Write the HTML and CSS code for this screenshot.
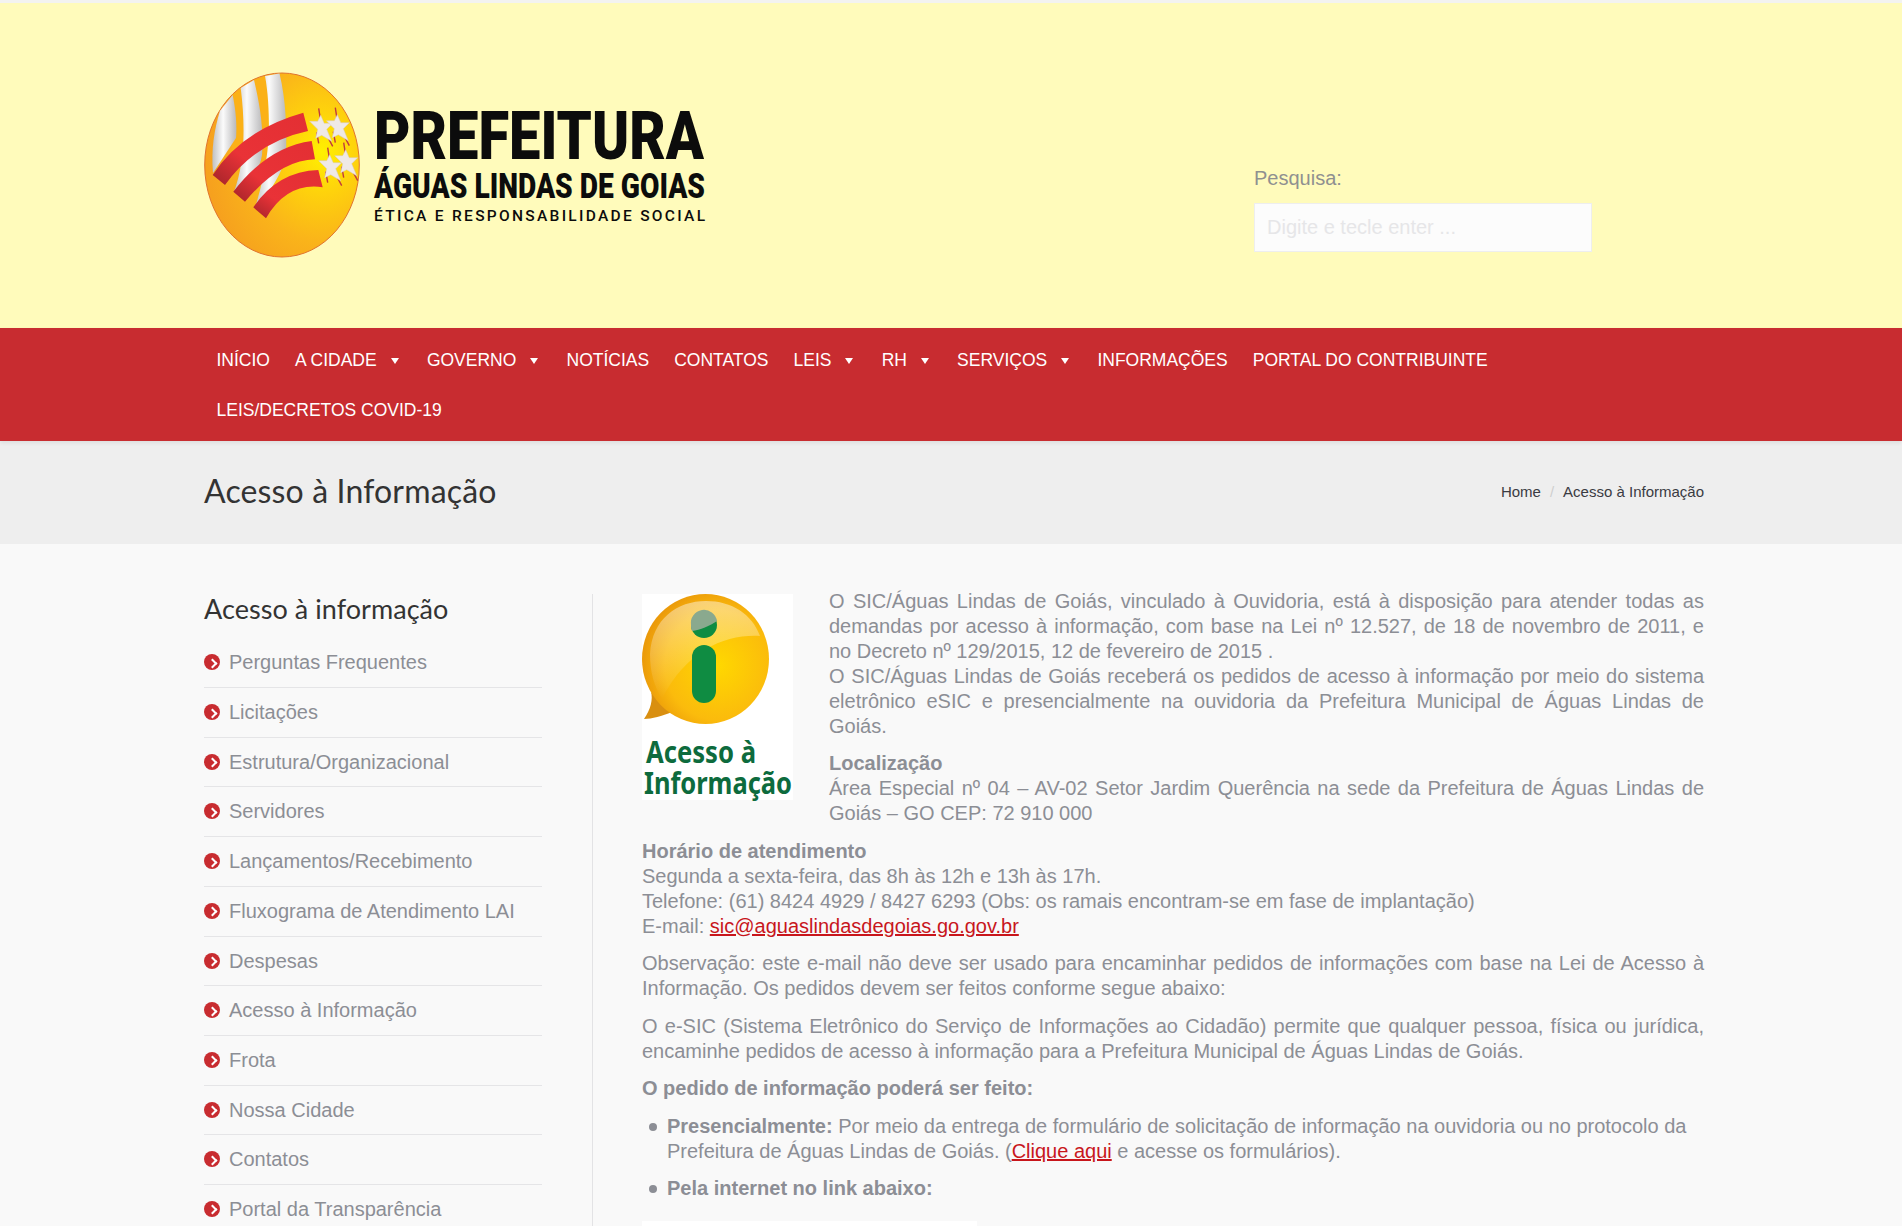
FILE: index.html
```html
<!DOCTYPE html>
<html lang="pt-BR">
<head>
<meta charset="utf-8">
<title>Acesso à Informação</title>
<link rel="stylesheet" href="styles.css">
</head>
<body>
<div class="page">
  <header class="top">
    <div class="wrap top-inner">
      <svg class="logo" viewBox="0 0 510 195" width="510" height="195" aria-label="Prefeitura Águas Lindas de Goias">
        <defs>
          <radialGradient id="sun" cx="0.76" cy="0.43" r="0.75">
            <stop offset="0" stop-color="#fff000"/>
            <stop offset="0.3" stop-color="#fed20c"/>
            <stop offset="0.65" stop-color="#fab41a"/>
            <stop offset="1" stop-color="#f6a11e"/>
          </radialGradient>
          <linearGradient id="silver" x1="0" x2="1" y1="0" y2="0">
            <stop offset="0" stop-color="#bfc0c2"/>
            <stop offset="0.45" stop-color="#fbfbfb"/>
            <stop offset="1" stop-color="#b9b9bb"/>
          </linearGradient>
          <linearGradient id="band" x1="0" x2="1" y1="1" y2="0">
            <stop offset="0" stop-color="#a3242a"/>
            <stop offset="0.35" stop-color="#e93237"/>
            <stop offset="1" stop-color="#e32f33"/>
          </linearGradient>
          <g id="st">
            <path class="sliver" d="M-3 -19 L-1 -6 M3 4 L11 19 M-5 5 L-3 16"/>
            <polygon class="star" points="-1,-12 2.500,-4 11,-4 5,2 10,14 0,8 -6,11 -4,2 -12,-6 -4,-6"/>
          </g>
        </defs>
        <ellipse cx="78" cy="95" rx="77.300" ry="92" fill="url(#sun)" stroke="#e0742e" stroke-width="1"/>
        <path class="orange" d="M28 25 L37 18 C 42 50 42 70 40 90 L 28 90Z"/>
        <path class="orange" d="M50 10 L61 6 C 66 40 66 80 58 115 L 48 100Z"/>
        <path class="stripe" d="M16 40.700 L28.700 25 C 32 42 33 55 32 68 L 9 103 C 7 80 10 60 16 40.700Z"/>
        <path class="stripe" d="M36.700 18 L50 10 C 56 35 60 60 58 85 C 56 100 45 112 34 122 L 30 122 C 40 95 42 60 36.700 18Z"/>
        <path class="stripe" d="M61 6 L75.500 3.500 C 82 30 83 60 82 85 C 80 100 65 125 51 138 C 58 115 64 90 65 60 C 65 40 64 22 61 6Z"/>
        <path class="bandred" d="M8.700 105 Q 38 60 99.300 42.700 L 104 61 Q 52 72 21 115Z"/>
        <path class="bandred" d="M29.300 121.700 Q 63.500 77 107.700 71 L 111 89.300 Q 76 90 41 131.700Z"/>
        <path class="bandred" d="M49.300 137.300 Q 73.600 101.400 114.300 100 L 118.700 117.300 Q 83 112 62 148.300Z"/>
        <use href="#st" x="117.700" y="57.300"/>
        <use href="#st" x="134.300" y="56.700"/>
        <use href="#st" x="126.700" y="96.700"/>
        <use href="#st" x="142.700" y="91.700"/>
        <text class="lg lg1" x="170" y="89" textLength="330" lengthAdjust="spacingAndGlyphs">PREFEITURA</text>
        <text class="lg lg2" x="170" y="128" textLength="331" lengthAdjust="spacingAndGlyphs">ÁGUAS LINDAS DE GOIAS</text>
        <text class="lg lg3" x="170" y="151" textLength="331" lengthAdjust="spacing">ÉTICA E RESPONSABILIDADE SOCIAL</text>
      </svg>
      <form class="search">
        <label class="search-label" for="q">Pesquisa:</label>
        <input class="search-input" id="q" type="text" placeholder="Digite e tecle enter ...">
      </form>
    </div>
  </header>

  <nav class="nav">
    <ul class="wrap nav-list">
      <li class="nav-item">INÍCIO</li>
      <li class="nav-item has-sub">A CIDADE</li>
      <li class="nav-item has-sub">GOVERNO</li>
      <li class="nav-item">NOTÍCIAS</li>
      <li class="nav-item">CONTATOS</li>
      <li class="nav-item has-sub">LEIS</li>
      <li class="nav-item has-sub">RH</li>
      <li class="nav-item has-sub">SERVIÇOS</li>
      <li class="nav-item">INFORMAÇÕES</li>
      <li class="nav-item">PORTAL DO CONTRIBUINTE</li>
      <li class="nav-item">LEIS/DECRETOS COVID-19</li>
    </ul>
  </nav>

  <section class="title-bar">
    <div class="wrap title-inner">
      <h1 class="page-title">Acesso à Informação</h1>
      <div class="crumbs"><span>Home</span><span class="crumb-sep">/</span><span>Acesso à Informação</span></div>
    </div>
  </section>

  <div class="wrap columns">
    <aside class="side">
      <h3 class="side-title">Acesso à informação</h3>
      <ul class="side-list">
        <li class="side-item">Perguntas Frequentes</li>
        <li class="side-item">Licitações</li>
        <li class="side-item">Estrutura/Organizacional</li>
        <li class="side-item">Servidores</li>
        <li class="side-item">Lançamentos/Recebimento</li>
        <li class="side-item">Fluxograma de Atendimento LAI</li>
        <li class="side-item">Despesas</li>
        <li class="side-item">Acesso à Informação</li>
        <li class="side-item">Frota</li>
        <li class="side-item">Nossa Cidade</li>
        <li class="side-item">Contatos</li>
        <li class="side-item">Portal da Transparência</li>
      </ul>
    </aside>
    <main class="main">
      <div class="body-text">
        <svg class="info-img" viewBox="0 0 151 206" width="151" height="206" aria-label="Acesso à Informação">
          <defs>
            <radialGradient id="gold" cx="0.6" cy="0.55" r="0.6">
              <stop offset="0" stop-color="#ffd800"/>
              <stop offset="0.7" stop-color="#fbbb0c"/>
              <stop offset="1" stop-color="#eb9a0a"/>
            </radialGradient>
            <linearGradient id="gloss" x1="0" x2="0" y1="0" y2="1">
              <stop offset="0" stop-color="#fff" stop-opacity="0.45"/>
              <stop offset="1" stop-color="#fff" stop-opacity="0"/>
            </linearGradient>
          </defs>
          <rect width="151" height="206" fill="#fff"/>
          <path d="M2 125 C 9 115 11 105 9 98 L 30 118 C 20 122 10 125 2 125Z" fill="#d98f10"/>
          <ellipse cx="63.500" cy="65" rx="63.500" ry="65" fill="url(#gold)"/>
          <path d="M8 60 C 10 25 35 7 64 7 C 90 7 110 20 118 42 C 85 40 45 55 20 105 C 12 92 8 78 8 60Z" fill="url(#gloss)"/>
          <circle cx="62" cy="31" r="13" fill="#0f8c42"/>
          <path d="M49 31 A 13 13 0 0 1 75 27 C 68 32 58 36 50 37 C 49 35 49 33 49 31Z" fill="#8aa98e"/>
          <rect x="50" y="51" width="24" height="58" rx="12" fill="#0f8c42"/>
          <text class="img-text" x="4" y="169" textLength="110" lengthAdjust="spacingAndGlyphs">Acesso à</text>
          <text class="img-text" x="2" y="200" textLength="148" lengthAdjust="spacingAndGlyphs">Informação</text>
        </svg>
        <p>O SIC/Águas Lindas de Goiás, vinculado à Ouvidoria, está à disposição para atender todas as demandas por acesso à informação, com base na Lei nº 12.527, de 18 de novembro de 2011, e no Decreto nº 129/2015, 12 de fevereiro de 2015 .<br>O SIC/Águas Lindas de Goiás receberá os pedidos de acesso à informação por meio do sistema eletrônico eSIC e presencialmente na ouvidoria da Prefeitura Municipal de Águas Lindas de Goiás.</p>
        <p><strong>Localização</strong><br>Área Especial nº 04 – AV-02 Setor Jardim Querência na sede da Prefeitura de Águas Lindas de Goiás – GO CEP: 72 910 000</p>
        <p class="clear"><strong>Horário de atendimento</strong><br>Segunda a sexta-feira, das 8h às 12h e 13h às 17h.<br>Telefone: (61) 8424 4929 / 8427 6293 (Obs: os ramais encontram-se em fase de implantação)<br>E-mail: <a class="link" href="#">sic@aguaslindasdegoias.go.gov.br</a></p>
        <p>Observação: este e-mail não deve ser usado para encaminhar pedidos de informações com base na Lei de Acesso à Informação. Os pedidos devem ser feitos conforme segue abaixo:</p>
        <p>O e-SIC (Sistema Eletrônico do Serviço de Informações ao Cidadão) permite que qualquer pessoa, física ou jurídica, encaminhe pedidos de acesso à informação para a Prefeitura Municipal de Águas Lindas de Goiás.</p>
        <p><strong>O pedido de informação poderá ser feito:</strong></p>
        <ul class="bullets">
          <li class="bullet"><strong>Presencialmente:</strong> Por meio da entrega de formulário de solicitação de informação na ouvidoria ou no protocolo da Prefeitura de Águas Lindas de Goiás. (<a class="link" href="#">Clique aqui</a> e acesse os formulários).</li>
          <li class="bullet"><strong>Pela internet no link abaixo:</strong></li>
        </ul>
        <div class="white-box"></div>
      </div>
    </main>
  </div>
</div>
</body>
</html>
```
FILE: styles.css
```css
* { box-sizing: border-box; }
html, body { margin: 0; padding: 0; }
body { background: #f9f9f9; color: #8c8e95; font-family: "Liberation Sans", Arial, sans-serif; font-size: 20px; line-height: 25px; }
.page { height: 1226px; overflow: hidden; }
.wrap { width: 1500px; margin-left: 204px; }

.top { height: 328px; background: #fffbbb; border-top: 3px solid #f3f3f0; }
.top-inner { display: flex; align-items: flex-start; }
.logo { display: block; margin-top: 67px; flex: none; overflow: visible; }
.search { margin-left: 540px; margin-top: 163px; width: 338px; display: flex; flex-direction: column; }
.search-label { height: 25px; margin-bottom: 12px; color: #8f9090; }
.search-input { width: 338px; height: 49px; padding: 0 12px; background: #fcfcfc; border: 1px solid #eeeeee; font: 20px "Liberation Sans", Arial, sans-serif; outline: none; }
.search-input::placeholder { color: #e6e6e8; opacity: 1; }

.stripe { fill: url(#silver); }
.orange { fill: #fbb117; }
.bandred { fill: url(#band); }
.star { fill: #efe9e6; stroke: #d8c9c4; stroke-width: 0.5; }
.sliver { fill: none; stroke: #c03a3e; stroke-width: 1.400; }
.lg { fill: #0c0c0c; font-family: "Roboto", "Liberation Sans", sans-serif; }
.lg1 { font-size: 66px; font-weight: 900; }
.lg2 { font-size: 35px; font-weight: 900; }
.lg3 { font-size: 15.500px; font-weight: 500; }

.nav { height: 113px; background: #c82c30; padding-top: 7px; position: relative; box-shadow: 0 2px 4px rgba(0,0,0,.07); }
.nav-list { list-style: none; padding: 0; margin-top: 0; margin-bottom: 0; display: flex; flex-wrap: wrap; }
.nav-item { height: 50px; line-height: 50px; padding: 0 12.500px; color: #fff; font-size: 17.500px; white-space: nowrap; }
.has-sub::after { content: ""; display: inline-block; margin-left: 14px; margin-right: 3.200px; vertical-align: 2px; border-left: 4px solid transparent; border-right: 4px solid transparent; border-top: 6px solid #fff; }

.title-bar { height: 103px; background: #eeeeee; }
.title-inner { height: 103px; padding-bottom: 3px; display: flex; align-items: center; justify-content: space-between; }
.page-title { margin: 0; font-family: "Lato", "Open Sans", sans-serif; font-weight: 400; font-size: 32px; letter-spacing: 0.150px; line-height: 36px; color: #333; }
.crumbs { display: flex; font-size: 15px; color: #3a3b42; }
.crumb-sep { margin: 0 9px; color: #cfcfcf; }

.columns { display: flex; }
.side { width: 338px; flex: none; padding-top: 47.400px; }
.side-title { margin: 0 0 11px; font-family: "Lato", "Open Sans", sans-serif; font-weight: 400; font-size: 27px; letter-spacing: 0.050px; line-height: 36px; color: #333; }
.side-list { list-style: none; margin: 0; padding: 0; }
.side-item { position: relative; padding: 12px 0 11.700px 25px; border-bottom: 1px solid #e5e5e7; }
.side-item::before { content: ""; position: absolute; left: 0; top: 16px; width: 16px; height: 16px; border-radius: 50%; background: #c82c30; }
.side-item::after { content: ""; position: absolute; left: 4.500px; top: 21.500px; width: 5px; height: 5px; border-top: 2px solid #fff; border-right: 2px solid #fff; transform: rotate(45deg); }

.main { flex: 1; margin-left: 50px; margin-top: 50px; padding-left: 49px; border-left: 1px solid #e3e3e5; min-width: 0; }
.body-text { margin-top: -5.500px; text-align: justify; }
.body-text p { margin: 0 0 12.500px; }
.info-img { float: left; margin: 5.500px 36px 8px 0; display: block; overflow: visible; }
.clear { clear: both; }
.link { color: #c8161c; text-decoration: underline; }
.bullets { list-style: none; margin: 0; padding: 0 0 0 25px; text-align: left; }
.bullet { position: relative; margin-bottom: 12.500px; }
.bullet::before { content: ""; position: absolute; left: -18px; top: 9px; width: 8px; height: 8px; border-radius: 50%; background: #8c8e95; }
.white-box { width: 335px; height: 120px; background: #fff; margin-top: 20px; }

.img-text { fill: #0d6b3d; font-family: "Noto Sans", sans-serif; font-weight: 700; font-size: 31px; }
```
